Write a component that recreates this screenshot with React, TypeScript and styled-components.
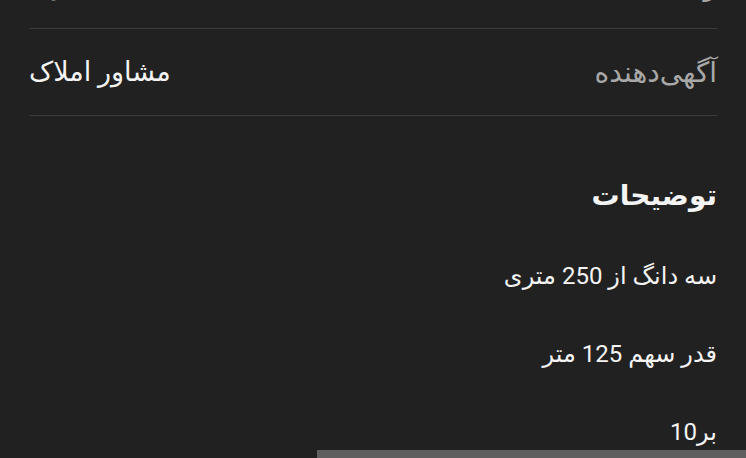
import React from 'react';
import styled, { createGlobalStyle } from 'styled-components';

const GlobalStyle = createGlobalStyle`
  html, body {
    margin: 0;
    padding: 0;
    background: #212121;
    overflow: hidden;
  }
  body {
    font-family: 'Roboto', 'DejaVu Sans', sans-serif;
  }
`;

const Page = styled.div`
  direction: rtl;
  width: 746px;
  height: 458px;
  background: #212121;
  color: #f2f2f2;
  overflow: hidden;
  position: relative;
`;

// the list is scrolled, so the first row sits partly above the window
const Content = styled.div`
  margin-top: -58px;
  padding: 0 29px;
`;

const InfoRow = styled.div`
  display: flex;
  justify-content: space-between;
  align-items: center;
  height: 86px;
  border-bottom: 1px solid #3a3a3a;
`;

const Label = styled.span`
  font-size: 28px;
  color: #a8a8a8;
`;

const Value = styled.span`
  font-size: 27px;
  color: #f4f4f4;
`;

const SectionTitle = styled.h2`
  margin: 58px 0 0 0;
  font-size: 28px;
  font-weight: bold;
  line-height: 44px;
  color: #f4f4f4;
`;

const Description = styled.div`
  margin-top: 19px;
`;

const DescLine = styled.p`
  margin: 0;
  font-size: 24px;
  line-height: 78px;
  color: #f4f4f4;
`;

const BottomBar = styled.div`
  position: absolute;
  left: 317px;
  right: 0;
  bottom: 0;
  height: 8px;
  background: #5f5f5f;
`;

const rows = [
  { label: 'وضعیت سند', value: 'تک‌برگ' },
  { label: 'آگهی‌دهنده', value: 'مشاور املاک' },
];

const lines = ['سه دانگ از 250 متری', 'قدر سهم 125 متر', 'بر10'];

const App: React.FC = () => {
  return (
    <Page>
      <GlobalStyle />
      <Content>
        {rows.map((row) => (
          <InfoRow key={row.label}>
            <Label>{row.label}</Label>
            <Value>{row.value}</Value>
          </InfoRow>
        ))}
        <SectionTitle>توضیحات</SectionTitle>
        <Description>
          {lines.map((line) => (
            <DescLine key={line}>{line}</DescLine>
          ))}
        </Description>
      </Content>
      <BottomBar />
    </Page>
  );
};

export default App;
